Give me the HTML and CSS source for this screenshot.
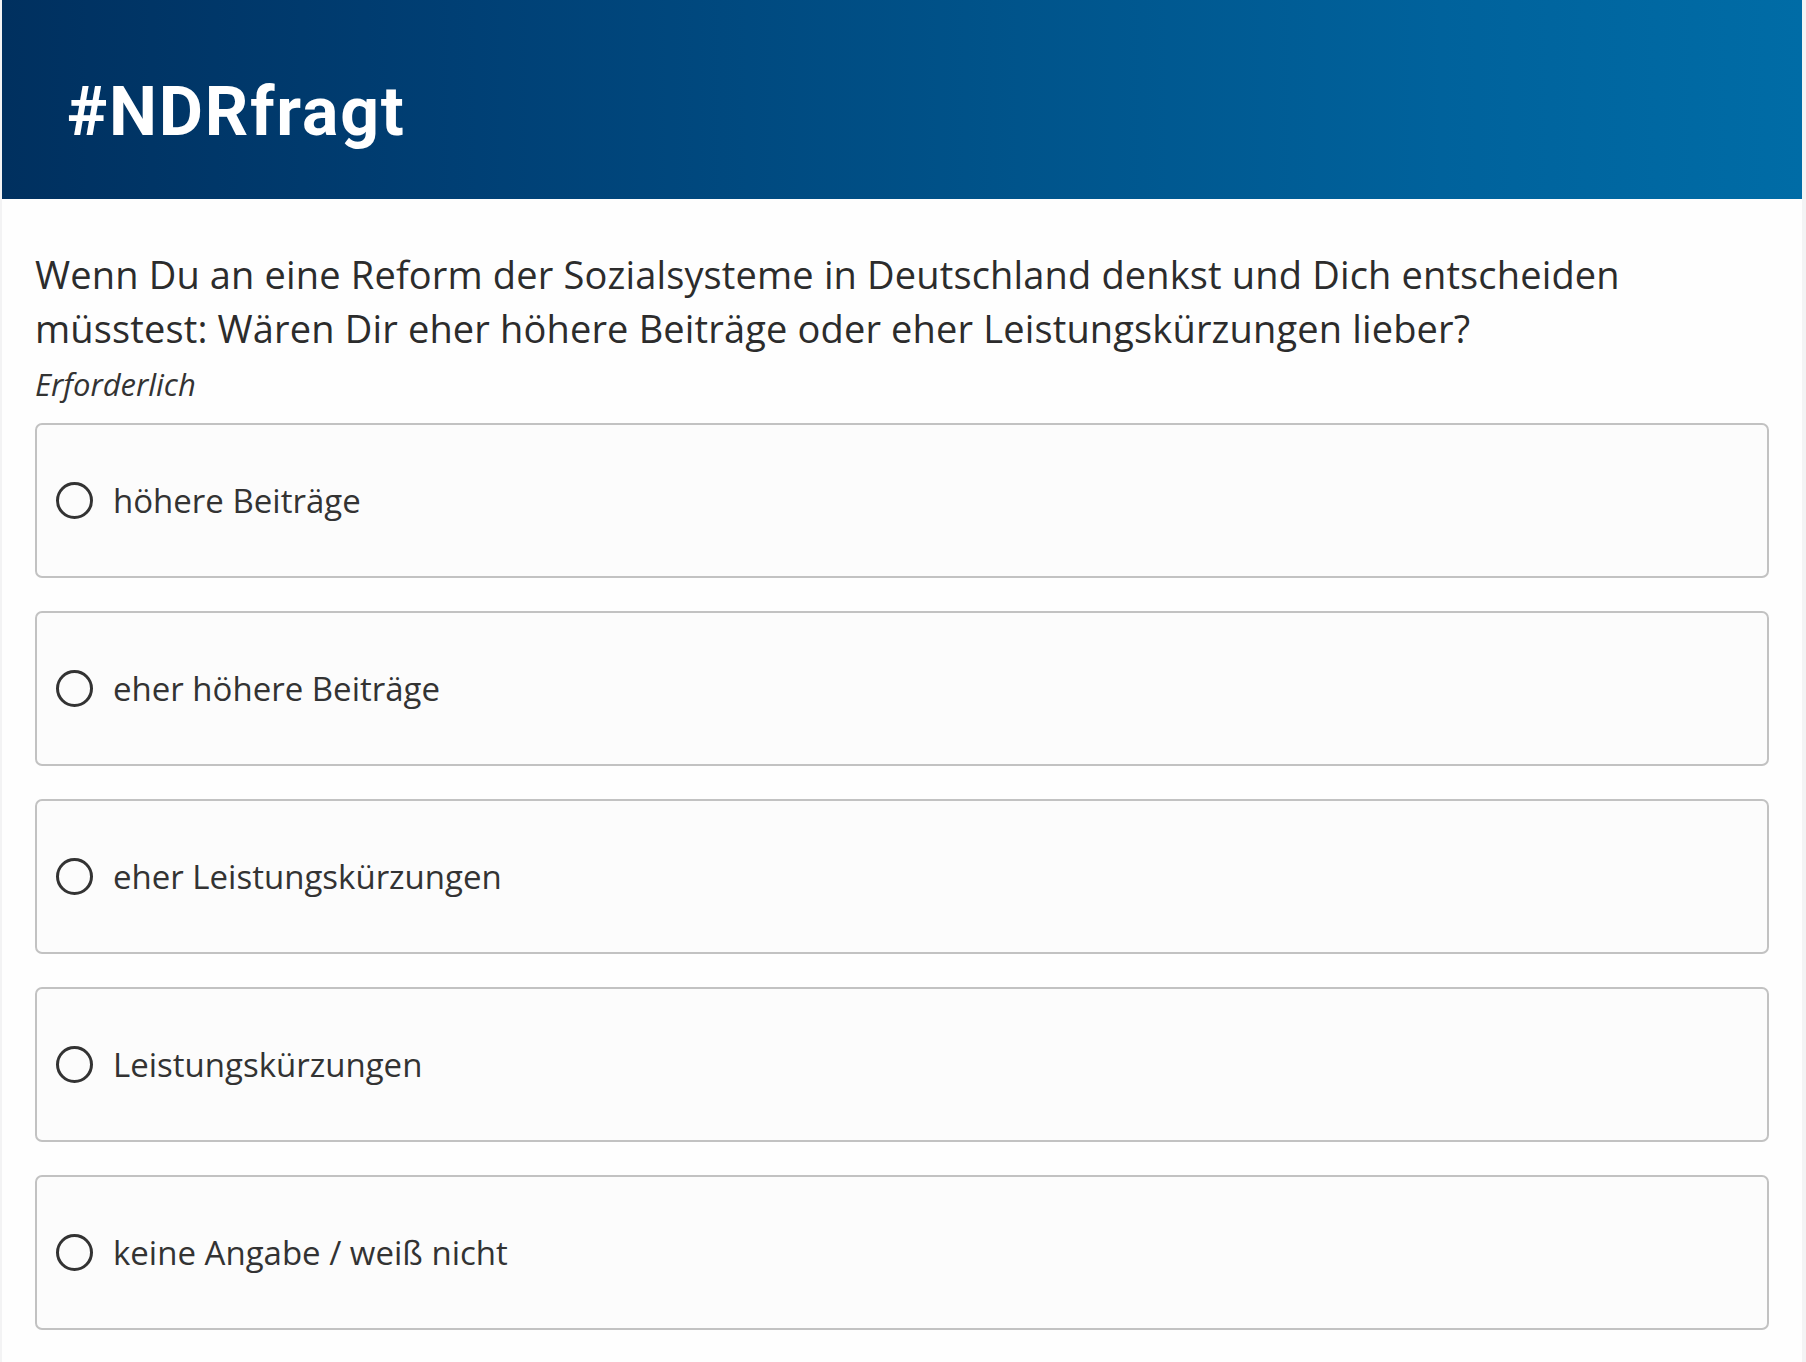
FILE: index.html
```html
<!DOCTYPE html>
<html lang="de">
<head>
    <meta charset="UTF-8">
    <meta name="viewport" content="width=device-width, initial-scale=1.0">
    <title>#NDRfragt</title>
    <link rel="stylesheet" href="styles.css">
</head>
<body>
    <div class="page">
        <!-- Kopfbereich -->
        <header class="banner">
            <div class="banner-title">#NDRfragt</div>
        </header>

        <!-- Frage -->
        <main class="survey">
            <fieldset class="question">
                <legend class="question-text">Wenn Du an eine Reform der Sozialsysteme in Deutschland denkst und Dich entscheiden müsstest: Wären Dir eher höhere Beiträge oder eher Leistungskürzungen lieber?</legend>
                <div class="required">Erforderlich</div>

                <div class="options">
                    <label class="option">
                        <input type="radio" name="reform" value="1">
                        <span class="radio-mark"></span>
                        <span class="option-label">höhere Beiträge</span>
                    </label>
                    <label class="option">
                        <input type="radio" name="reform" value="2">
                        <span class="radio-mark"></span>
                        <span class="option-label">eher höhere Beiträge</span>
                    </label>
                    <label class="option">
                        <input type="radio" name="reform" value="3">
                        <span class="radio-mark"></span>
                        <span class="option-label">eher Leistungskürzungen</span>
                    </label>
                    <label class="option">
                        <input type="radio" name="reform" value="4">
                        <span class="radio-mark"></span>
                        <span class="option-label">Leistungskürzungen</span>
                    </label>
                    <label class="option">
                        <input type="radio" name="reform" value="5">
                        <span class="radio-mark"></span>
                        <span class="option-label">keine Angabe / weiß nicht</span>
                    </label>
                </div>
            </fieldset>
        </main>
    </div>
</body>
</html>
```

FILE: styles.css
```css
:root {
    --ndr-dark: #00305f;
    --ndr-light: #006ca6;
    --text-color: #333333;
    --border-color: #c2c2c2;
}

html, body {
    margin: 0;
    padding: 0;
}

body {
    background: #f3f3f4;
    font-family: 'Open Sans', 'Liberation Sans', sans-serif;
    color: var(--text-color);
}

.page {
    margin: 0 4px 0 2px;
    min-height: 100vh;
    background: #fefefe;
}

/* Kopfbereich */
.banner {
    height: 199px;
    box-sizing: border-box;
    padding: 78px 0 0 65px;
    background: linear-gradient(90deg, #00305f 0%, #003f74 25%, #00538a 55%, #00629c 80%, #006ca6 100%);
}

.banner-title {
    font-family: Roboto, 'Liberation Sans', sans-serif;
    font-weight: 700;
    font-size: 68px;
    letter-spacing: 1.8px;
    line-height: 1;
    color: #ffffff;
}

/* Frage */
.survey {
    padding: 48px 33px 40px;
}

.question {
    margin: 0;
    padding: 0;
    border: none;
    min-width: 0;
}

.question-text {
    padding: 0;
    font-size: 38px;
    font-weight: 500;
    letter-spacing: 0.15px;
    line-height: 54px;
    color: #2c2c2c;
}

.required {
    margin-top: 11px;
    font-size: 31px;
    font-style: italic;
    line-height: 36px;
}

.options {
    margin-top: 21px;
    display: flex;
    flex-direction: column;
    gap: 33px;
}

.option {
    height: 155px;
    box-sizing: border-box;
    display: flex;
    align-items: center;
    gap: 20px;
    padding: 0 19px;
    background: #fcfcfc;
    border: 2px solid var(--border-color);
    border-radius: 7px;
    cursor: pointer;
}

.option input {
    display: none;
}

.radio-mark {
    width: 37px;
    height: 37px;
    box-sizing: border-box;
    border: 3.5px solid #333333;
    border-radius: 50%;
    flex-shrink: 0;
}

.option-label {
    font-size: 33px;
    line-height: 44px;
}
```
